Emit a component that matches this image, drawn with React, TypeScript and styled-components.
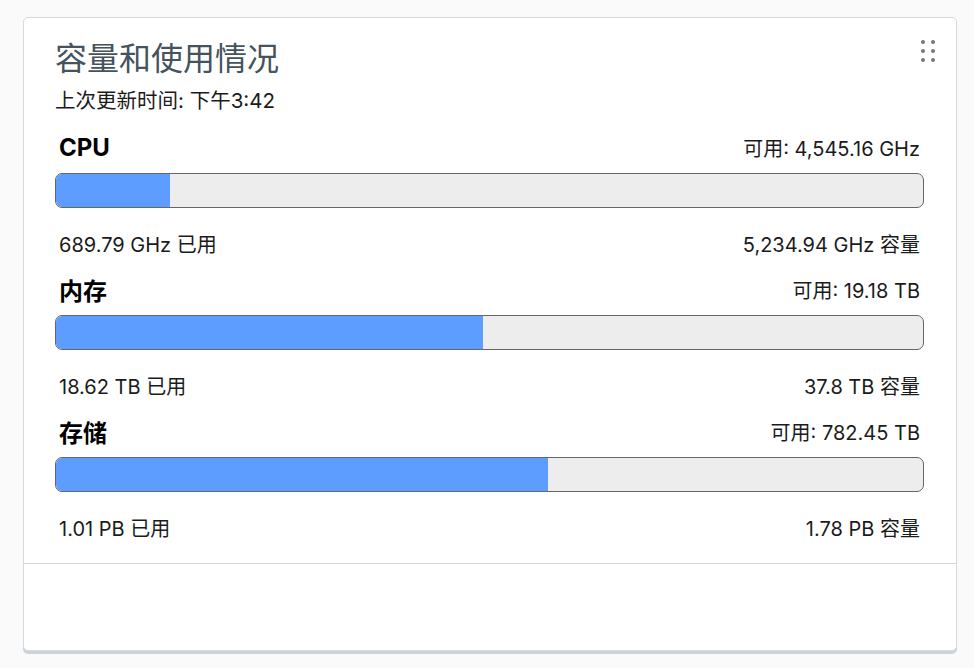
import React from 'react';
import styled, { createGlobalStyle } from 'styled-components';

const GlobalStyle = createGlobalStyle`
    html, body {
        margin: 0;
        padding: 0;
        background: #fafafa;
    }

    body {
        font-family: Inter, 'Noto Sans CJK SC', sans-serif;
        color: #1b1b1b;
    }
`;

const Page = styled.div`
    padding: 17px 17px 13px 23px;
`;

const Card = styled.div`
    position: relative;
    background: #ffffff;
    border: 1px solid #d3dade;
    border-radius: 5px;
    box-shadow: 0 3px 0 0 #cbd4d9;
`;

const CardBlock = styled.div`
    padding: 22px 32px 24px 31px;
    border-bottom: 1px solid #d3dade;
`;

const CardFooter = styled.div`
    height: 86px;
`;

const Title = styled.h2`
    margin: 0;
    font-size: 32px;
    line-height: 38px;
    font-weight: 400;
    color: #45535c;
`;

const Updated = styled.div`
    margin-top: 11px;
    font-size: 20.5px;
    line-height: 24px;
`;

const DragHandle = styled.div`
    position: absolute;
    top: 22px;
    right: 21px;
    display: grid;
    grid-template-columns: repeat(2, 4px);
    grid-auto-rows: 4px;
    column-gap: 6px;
    row-gap: 5px;
`;

const Dot = styled.span`
    width: 4px;
    height: 4px;
    border-radius: 50%;
    background: #777777;
`;

const Section = styled.div`
    margin-top: 20px;
`;

const Row = styled.div<{ $height: number }>`
    display: flex;
    justify-content: space-between;
    align-items: center;
    height: ${(p) => p.$height}px;
    padding: 0 4px;
`;

const Label = styled.span`
    font-size: 24px;
    font-weight: 700;
    color: #000000;
`;

const Value = styled.span`
    font-size: 20px;
`;

const Track = styled.div`
    margin: 12px 0 23px;
    height: 33px;
    border: 1px solid #666666;
    border-radius: 7px;
    background: #ededed;
    overflow: hidden;
`;

const Fill = styled.div`
    height: 100%;
    background: #5c9dff;
`;

interface Usage {
    name: string;
    free: string;
    used: string;
    capacity: string;
    ratio: number;
}

const usages: Usage[] = [
    { name: 'CPU', free: '可用: 4,545.16 GHz', used: '689.79 GHz 已用', capacity: '5,234.94 GHz 容量', ratio: 689.79 / 5234.94 },
    { name: '内存', free: '可用: 19.18 TB', used: '18.62 TB 已用', capacity: '37.8 TB 容量', ratio: 18.62 / 37.8 },
    { name: '存储', free: '可用: 782.45 TB', used: '1.01 PB 已用', capacity: '1.78 PB 容量', ratio: 1.01 / 1.78 },
];

const UsageSection = ({ usage }: { usage: Usage }): React.ReactElement => (
    <Section>
        <Row $height={28}>
            <Label>{usage.name}</Label>
            <Value>{usage.free}</Value>
        </Row>
        <Track>
            <Fill style={{ width: `${usage.ratio * 100}%` }} />
        </Track>
        <Row $height={24}>
            <Value>{usage.used}</Value>
            <Value>{usage.capacity}</Value>
        </Row>
    </Section>
);

const App = (): React.ReactElement => {
    return (
        <Page>
            <GlobalStyle />
            <Card>
                <DragHandle>
                    {Array.from({ length: 6 }).map((_, i) => (
                        <Dot key={i} />
                    ))}
                </DragHandle>
                <CardBlock>
                    <Title>容量和使用情况</Title>
                    <Updated>上次更新时间: 下午3:42</Updated>
                    {usages.map((usage) => (
                        <UsageSection key={usage.name} usage={usage} />
                    ))}
                </CardBlock>
                <CardFooter />
            </Card>
        </Page>
    );
};

export default App;
